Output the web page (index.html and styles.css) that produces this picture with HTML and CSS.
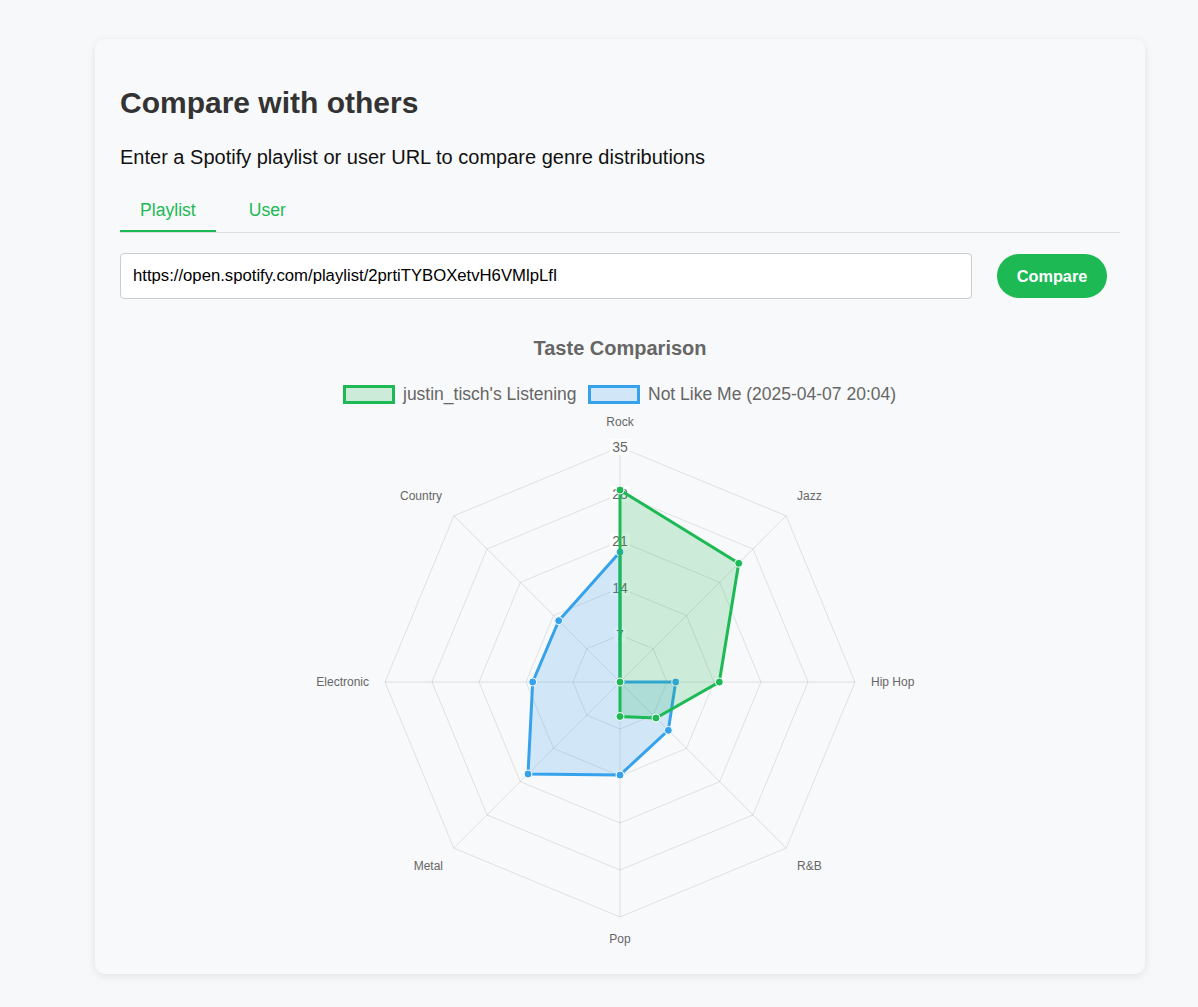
FILE: index.html
```html
<!DOCTYPE html>
<html lang="en">
<head>
<meta charset="utf-8">
<title>Compare with others</title>
<link rel="stylesheet" href="styles.css">
</head>
<body>
<div class="card">
  <h2 class="card-title">Compare with others</h2>
  <p class="card-subtitle">Enter a Spotify playlist or user URL to compare genre distributions</p>
  <div class="tabs">
    <button class="tab tab-active">Playlist</button>
    <button class="tab">User</button>
  </div>
  <div class="url-row">
    <input class="url-input" type="text" value="https://open.spotify.com/playlist/2prtiTYBOXetvH6VMlpLfI">
    <button class="compare-btn">Compare</button>
  </div>
  <div class="chart">
    <svg class="chart-svg" width="1000" height="640" viewBox="120 320 1000 640" xmlns="http://www.w3.org/2000/svg">
      <text class="chart-title" x="620" y="355" text-anchor="middle">Taste Comparison</text>

      <rect x="344.5" y="386.5" width="49" height="16" fill="rgba(29,185,84,0.2)" stroke="#1db954" stroke-width="3"/>
      <text class="legend-text" x="403" y="400">justin_tisch's Listening</text>
      <rect x="589.5" y="386.5" width="49" height="16" fill="rgba(54,162,235,0.2)" stroke="#36a2eb" stroke-width="3"/>
      <text class="legend-text" x="648" y="400">Not Like Me (2025-04-07 20:04)</text>

      <g class="grid" fill="none" stroke="rgba(0,0,0,0.1)" stroke-width="1">
        <polygon points="620,635 653.23,648.77 667,682 653.23,715.23 620,729 586.77,715.23 573,682 586.77,648.77"/>
        <polygon points="620,588 686.47,615.53 714,682 686.47,748.47 620,776 553.53,748.47 526,682 553.53,615.53"/>
        <polygon points="620,541 719.70,582.30 761,682 719.70,781.70 620,823 520.30,781.70 479,682 520.30,582.30"/>
        <polygon points="620,494 752.94,549.06 808,682 752.94,814.94 620,870 487.06,814.94 432,682 487.06,549.06"/>
        <polygon points="620,447 786.17,515.83 855,682 786.17,848.17 620,917 453.83,848.17 385,682 453.83,515.83"/>
        <line x1="620" y1="682" x2="620" y2="447"/>
        <line x1="620" y1="682" x2="786.17" y2="515.83"/>
        <line x1="620" y1="682" x2="855" y2="682"/>
        <line x1="620" y1="682" x2="786.17" y2="848.17"/>
        <line x1="620" y1="682" x2="620" y2="917"/>
        <line x1="620" y1="682" x2="453.83" y2="848.17"/>
        <line x1="620" y1="682" x2="385" y2="682"/>
        <line x1="620" y1="682" x2="453.83" y2="515.83"/>
      </g>

      <g class="point-labels">
        <text x="620" y="426" text-anchor="middle">Rock</text>
        <text x="797" y="500">Jazz</text>
        <text x="871" y="686">Hip Hop</text>
        <text x="797" y="870">R&amp;B</text>
        <text x="620" y="943" text-anchor="middle">Pop</text>
        <text x="443" y="870" text-anchor="end">Metal</text>
        <text x="369" y="686" text-anchor="end">Electronic</text>
        <text x="442" y="500" text-anchor="end">Country</text>
      </g>

      <g class="ticks">
        <rect x="614" y="627" width="12" height="16" fill="rgba(255,255,255,0.75)"/>
        <text x="620" y="640" text-anchor="middle">7</text>
        <rect x="610" y="580" width="20" height="16" fill="rgba(255,255,255,0.75)"/>
        <text x="620" y="593" text-anchor="middle">14</text>
        <rect x="610" y="533" width="20" height="16" fill="rgba(255,255,255,0.75)"/>
        <text x="620" y="546" text-anchor="middle">21</text>
        <rect x="610" y="486" width="20" height="16" fill="rgba(255,255,255,0.75)"/>
        <text x="620" y="499" text-anchor="middle">28</text>
        <rect x="610" y="439" width="20" height="16" fill="rgba(255,255,255,0.75)"/>
        <text x="620" y="452" text-anchor="middle">35</text>
      </g>

      <g class="dataset-blue">
        <polygon points="620,552 620,682 675.7,682 668.3,730.3 620,775 528,774 532.7,682 558.7,620.7" fill="rgba(54,162,235,0.2)" stroke="#36a2eb" stroke-width="3" stroke-linejoin="miter"/>
        <g fill="#36a2eb" stroke="#ffffff" stroke-width="1">
          <circle cx="620" cy="552" r="4"/>
          <circle cx="620" cy="682" r="4"/>
          <circle cx="675.7" cy="682" r="4"/>
          <circle cx="668.3" cy="730.3" r="4"/>
          <circle cx="620" cy="775" r="4"/>
          <circle cx="528" cy="774" r="4"/>
          <circle cx="532.7" cy="682" r="4"/>
          <circle cx="558.7" cy="620.7" r="4"/>
        </g>
      </g>

      <g class="dataset-green">
        <polygon points="620,490 738.7,563.3 719.3,682 656,718 620,716.5 620,682 620,682 620,682" fill="rgba(29,185,84,0.2)" stroke="#1db954" stroke-width="3" stroke-linejoin="miter"/>
        <g fill="#1db954" stroke="#ffffff" stroke-width="1">
          <circle cx="620" cy="490" r="4"/>
          <circle cx="738.7" cy="563.3" r="4"/>
          <circle cx="719.3" cy="682" r="4"/>
          <circle cx="656" cy="718" r="4"/>
          <circle cx="620" cy="716.5" r="4"/>
          <circle cx="620" cy="682" r="4"/>
        </g>
      </g>
    </svg>
  </div>
</div>
</body>
</html>
```
FILE: styles.css
```css
* {
  box-sizing: border-box;
}

body {
  margin: 0;
  padding: 39px 0 33px 0;
  background: #f7f8fa;
  font-family: "Liberation Sans", Arial, Helvetica, sans-serif;
}

.card {
  width: 1050px;
  margin-left: 95px;
  padding: 47px 25px 14px 25px;
  background: #f8f9fa;
  border-radius: 10px;
  box-shadow: 0 2px 10px rgba(0, 0, 0, 0.09);
}

.card-title {
  margin: 0;
  font-size: 30px;
  line-height: 34px;
  font-weight: bold;
  color: #333333;
}

.card-subtitle {
  margin: 26px 0 21px 0;
  font-size: 20px;
  line-height: 23px;
  color: #111111;
}

.tabs {
  display: flex;
  gap: 13px;
  border-bottom: 1px solid #dddddd;
}

.tab {
  padding: 10px 20px;
  margin: 0;
  background: none;
  border: none;
  border-bottom: 2px solid transparent;
  font-family: inherit;
  font-size: 17.6px;
  line-height: 20px;
  color: #1db954;
  cursor: pointer;
}

.tab-active {
  border-bottom-color: #1db954;
}

.url-row {
  display: flex;
  align-items: center;
  margin-top: 20px;
}

.url-input {
  flex: 1;
  height: 46px;
  padding: 0 12px;
  border: 1px solid #cccccc;
  border-radius: 4px;
  background: #ffffff;
  font-family: inherit;
  font-size: 16.7px;
  color: #000000;
}

.compare-btn {
  margin-left: 25px;
  margin-right: 13px;
  width: 110px;
  height: 44px;
  border: none;
  border-radius: 22px;
  background: #1db954;
  color: #ffffff;
  font-family: inherit;
  font-size: 16.3px;
  font-weight: bold;
  cursor: pointer;
}

.chart {
  margin-top: 21px;
}

.chart-svg {
  display: block;
  font-family: "Liberation Sans", Arial, Helvetica, sans-serif;
}

.chart-title {
  font-size: 20px;
  font-weight: bold;
  fill: #666666;
}

.legend-text {
  font-size: 17.5px;
  fill: #666666;
}

.point-labels text {
  font-size: 12px;
  fill: #666666;
}

.ticks text {
  font-size: 14px;
  fill: #666666;
}
```
